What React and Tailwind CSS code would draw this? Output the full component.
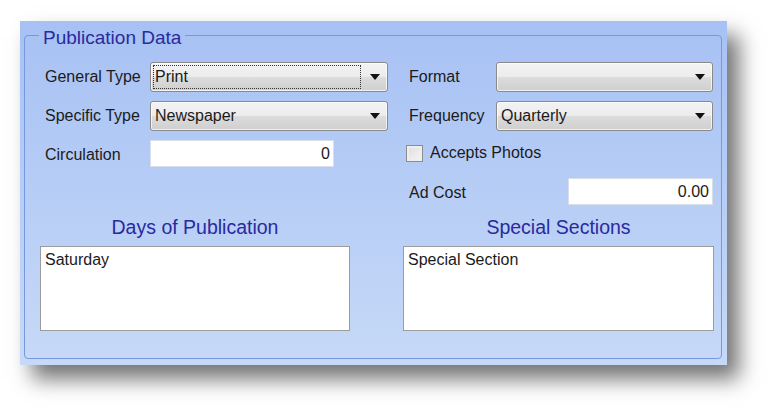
import React from 'react';

const Arrow = () => (
  <svg width="10" height="6" viewBox="0 0 10 6" className="shrink-0">
    <path d="M0 0 H10 L5 6 Z" fill="#111" />
  </svg>
);

const Combo = ({ value, width, focused }) => (
  <div
    className={`${width} h-[30px] flex items-center rounded-[3px] border border-[#8a8a8a] bg-[linear-gradient(#f3f3f3_0%,#ececec_48%,#dcdcdc_52%,#cfcfcf_100%)] shadow-[inset_0_0_0_1px_rgba(255,255,255,0.7)] pl-[2px] pr-[7px]`}
  >
    <div
      className={`flex-1 h-[24px] flex items-center pl-[1px] mr-[9px] ${
        focused ? 'border border-dotted border-[#333]' : 'border border-transparent'
      }`}
    >
      {value}
    </div>
    <Arrow />
  </div>
);

const TextBox = ({ value, width }) => (
  <div className={`${width} h-[27px] flex items-center justify-end bg-white border border-[#d9dfe9] pr-[3px]`}>
    {value}
  </div>
);

const ListBox = ({ items }) => (
  <div className="w-full h-[85px] bg-white border border-[#9c9c9c] px-[4px] pt-[3px] leading-[20px]">
    {items.map((it) => (
      <div key={it}>{it}</div>
    ))}
  </div>
);

export default function App() {
  return (
    <div className="w-[783px] h-[419px] bg-white pt-[21px] pl-[20px] font-['Liberation_Sans',Arial,sans-serif] text-[16px] text-[#1b1b1b]">
      <div className="w-[707px] h-[344px] bg-[linear-gradient(#a7c1f4,#c6d9f7)] shadow-[12px_14px_20px_rgba(0,0,0,0.55)] pt-[3px] pl-[4px] pr-[5px] pb-[6px] flex">
        <fieldset className="flex-1 border border-[#7798dd] rounded-[4px] px-0 pb-0 min-w-0">
          <legend className="ml-[14px] px-[4px] text-[19px] leading-[22px] text-[#2a2a9e]">
            <span className="relative top-[3px]">Publication Data</span>
          </legend>
          <div className="pl-[15px] pr-[7px] pt-[16px]">
            {/* row 1 */}
            <div className="flex h-[30px] items-center">
              <div className="w-[363px] flex items-center">
                <span className="w-[110px] pl-[5px]">General Type</span>
                <Combo value="Print" width="w-[238px]" focused />
              </div>
              <div className="flex items-center">
                <span className="w-[93px] pl-[6px]">Format</span>
                <Combo value="" width="w-[217px]" />
              </div>
            </div>
            {/* row 2 */}
            <div className="flex h-[30px] items-center mt-[9px]">
              <div className="w-[363px] flex items-center">
                <span className="w-[110px] pl-[5px]">Specific Type</span>
                <Combo value="Newspaper" width="w-[238px]" />
              </div>
              <div className="flex items-center">
                <span className="w-[93px] pl-[6px]">Frequency</span>
                <Combo value="Quarterly" width="w-[217px]" />
              </div>
            </div>
            {/* row 3 */}
            <div className="flex h-[27px] items-center mt-[9px]">
              <div className="w-[363px] flex items-center">
                <span className="w-[110px] pl-[5px] pt-[2px]">Circulation</span>
                <TextBox value="0" width="w-[184px]" />
              </div>
              <div className="flex items-center pl-[3px]">
                <span className="w-[17px] h-[17px] border border-[#8c8c8c] bg-[linear-gradient(135deg,#dcdcdc,#f7f7f7)] shadow-[inset_0_0_0_2px_#eeeeee]" />
                <span className="ml-[7px] -mt-[2px]">Accepts Photos</span>
              </div>
            </div>
            {/* row 4 */}
            <div className="flex h-[27px] items-center mt-[11px]">
              <div className="w-[363px]" />
              <div className="w-[310px] flex items-center">
                <span className="pl-[6px] pt-[3px]">Ad Cost</span>
                <div className="ml-auto">
                  <TextBox value="0.00" width="w-[145px]" />
                </div>
              </div>
            </div>
            {/* headings */}
            <div className="flex mt-[11px] h-[23px] text-[19.5px] leading-[23px] text-[#2a2a9e]">
              <div className="w-[310px] text-center">Days of Publication</div>
              <div className="w-[53px]" />
              <div className="w-[311px] text-center">Special Sections</div>
            </div>
            {/* lists */}
            <div className="flex mt-[7px]">
              <div className="w-[310px]">
                <ListBox items={['Saturday']} />
              </div>
              <div className="w-[53px]" />
              <div className="w-[311px]">
                <ListBox items={['Special Section']} />
              </div>
            </div>
          </div>
        </fieldset>
      </div>
    </div>
  );
}
